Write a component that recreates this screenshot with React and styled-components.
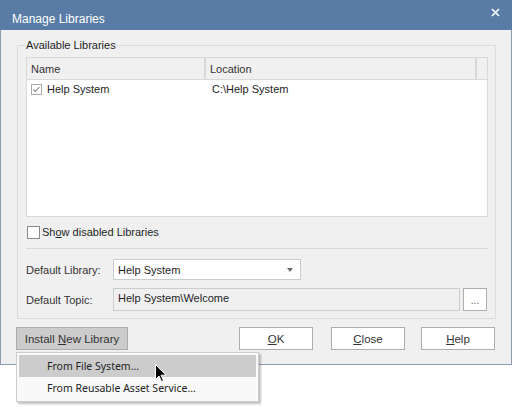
import React from 'react'
import styled, { createGlobalStyle } from 'styled-components'

const Global = createGlobalStyle`
  body {
    margin: 0;
    background: #ffffff;
    font-family: "Liberation Sans", Arial, sans-serif;
    font-size: 11px;
    color: #1e1e1e;
  }
`

const Page = styled.div`
  position: relative;
  width: 513px;
  height: 407px;
  overflow: hidden;
`

const Window = styled.div`
  width: 512px;
  box-sizing: border-box;
  background: #f0f0f0;
  border: 1px solid #8b9cb2;
  border-top: none;
`

const TitleBar = styled.div`
  height: 30px;
  margin: 0 -1px;
  background: #587ca5;
  color: #ffffff;
  display: flex;
  align-items: flex-start;
  justify-content: space-between;
  padding: 0 12px 0 12px;
  box-sizing: border-box;
  font-family: "Liberation Sans", sans-serif;
  font-size: 12px;
`

const Title = styled.span`
  margin-top: 12px;
`

const Close = styled.svg`
  margin-top: 8px;
`

const Body = styled.div`
  padding: 8px 15px 14px 16px;
`

const Group = styled.fieldset`
  margin: 0;
  min-width: 0;
  border: 1px solid #dcdcdc;
  padding: 5px 7px 7px 8px;
`

const Legend = styled.legend`
  padding: 0 1px;
  margin-left: -1px;
  line-height: 14px;
`

const List = styled.div`
  height: 160px;
  box-sizing: border-box;
  border: 1px solid #d9d9d9;
  background: #ffffff;
`

const Header = styled.div`
  display: flex;
  height: 22px;
  background: #f0f0f0;
  border-bottom: 1px solid #d9d9d9;
  box-sizing: border-box;
`

const HeadCell = styled.div`
  width: ${p => p.w}px;
  flex: ${p => (p.w ? 'none' : '1')};
  display: flex;
  align-items: center;
  padding-left: 4px;
  box-sizing: border-box;
  border-right: ${p => (p.last ? 'none' : '2px solid #d9d9d9')};
  color: #333;
`

const Row = styled.div`
  display: flex;
  align-items: center;
  height: 18px;
`

const Cell = styled.div`
  width: ${p => p.w}px;
  display: flex;
  align-items: center;
  gap: 5px;
  padding-left: ${p => p.pl}px;
  box-sizing: border-box;
`

const Check = styled.span`
  width: ${p => p.size}px;
  height: ${p => p.size}px;
  box-sizing: border-box;
  border: 1px solid ${p => (p.checked ? '#a8a8a8' : '#8a8a8a')};
  background: #ffffff;
  display: inline-flex;
  align-items: center;
  justify-content: center;
`

const CheckRow = styled.label`
  display: flex;
  align-items: center;
  gap: 2px;
  margin: 8px 0 0 1px;
  height: 14px;
`

const Separator = styled.div`
  height: 1px;
  background: #d9d9d9;
  margin: 9px 0 10px;
`

const FieldRow = styled.div`
  display: flex;
  align-items: center;
  margin-bottom: ${p => p.mb || 0}px;
`

const Label = styled.div`
  width: 87px;
  color: #333;
`

const Combo = styled.div`
  width: 188px;
  height: 21px;
  box-sizing: border-box;
  border: 1px solid #cccccc;
  background: #ffffff;
  display: flex;
  align-items: center;
  justify-content: space-between;
  padding: 0 7px 0 4px;
`

const Arrow = styled.span`
  width: 0;
  height: 0;
  border-left: 3px solid transparent;
  border-right: 3px solid transparent;
  border-top: 4px solid #6e6e6e;
`

const TextBox = styled.div`
  width: 347px;
  height: 23px;
  box-sizing: border-box;
  border: 1px solid #cccccc;
  background: #f0f0f0;
  padding: 3px 4px;
`

const SmallButton = styled.div`
  width: 24px;
  height: 23px;
  margin-left: 3px;
  box-sizing: border-box;
  border: 1px solid #adadad;
  background: #ffffff;
  display: flex;
  align-items: flex-end;
  justify-content: center;
  padding-bottom: 4px;
  font-size: 10px;
  color: #555;
`

const Footer = styled.div`
  display: flex;
  margin: 8px 0 0 -1px;
`

const Button = styled.div`
  width: ${p => p.w}px;
  height: 23px;
  margin-left: ${p => p.ml || 0}px;
  box-sizing: border-box;
  border: 1px solid #adadad;
  background: ${p => (p.pressed ? '#cccccc' : '#ffffff')};
  display: flex;
  align-items: center;
  justify-content: center;
  color: #333;
  font-size: 11.5px;
  u { text-decoration: underline; }
`

const Menu = styled.div`
  position: absolute;
  left: 16px;
  top: 352px;
  width: 243px;
  box-sizing: border-box;
  border: 1px solid #cccccc;
  background: #f9f9f9;
  padding: 2px;
  box-shadow: 2px 2px 2px rgba(0, 0, 0, 0.25);
  font-family: "Noto Sans", sans-serif;
  font-size: 10.5px;
`

const MenuItem = styled.div`
  height: 22px;
  display: flex;
  align-items: center;
  padding-left: 28px;
  background: ${p => (p.active ? '#cccccc' : 'transparent')};
  color: #222;
`

const Cursor = styled.svg`
  position: absolute;
  left: 155px;
  top: 364px;
`

export default function App() {
  return (
    <Page>
      <Global />
      <Window>
        <TitleBar>
          <Title>Manage Libraries</Title>
          <Close width="9" height="9" viewBox="0 0 9 9">
            <path d="M1 1L8 8M8 1L1 8" stroke="#fff" strokeWidth="1.6" />
          </Close>
        </TitleBar>
        <Body>
          <Group>
            <Legend>Available Libraries</Legend>
            <List>
              <Header>
                <HeadCell w={179}>Name</HeadCell>
                <HeadCell w={271}>Location</HeadCell>
                <HeadCell last />
              </Header>
              <Row>
                <Cell w={180} pl={4}>
                  <Check size={11} checked>
                    <svg width="9" height="9" viewBox="0 0 9 9">
                      <path d="M1.5 4.5L3.5 6.5L7.5 2" fill="none" stroke="#888" strokeWidth="1.1" />
                    </svg>
                  </Check>
                  <span>Help System</span>
                </Cell>
                <Cell w={271} pl={5}>C:\Help System</Cell>
              </Row>
            </List>
            <CheckRow>
              <Check size={13} />
              <span>Sh<u>o</u>w disabled Libraries</span>
            </CheckRow>
            <Separator />
            <FieldRow mb={8}>
              <Label>Default Library:</Label>
              <Combo>
                <span>Help System</span>
                <Arrow />
              </Combo>
            </FieldRow>
            <FieldRow>
              <Label>Default Topic:</Label>
              <TextBox>Help System\Welcome</TextBox>
              <SmallButton>...</SmallButton>
            </FieldRow>
          </Group>
          <Footer>
            <Button w={112} pressed><span>Install <u>N</u>ew Library</span></Button>
            <Button w={74} ml={111}><span><u>O</u>K</span></Button>
            <Button w={74} ml={18}><span><u>C</u>lose</span></Button>
            <Button w={74} ml={16}><span><u>H</u>elp</span></Button>
          </Footer>
        </Body>
      </Window>
      <Menu>
        <MenuItem active>From File System...</MenuItem>
        <MenuItem>From Reusable Asset Service...</MenuItem>
      </Menu>
      <Cursor width="12" height="19" viewBox="0 0 12 19">
        <path d="M0.5 0.5V15.5L4 12L6.5 17.5L8.5 16.5L6 11.2H11Z" fill="#000" stroke="#fff" strokeWidth="1" />
      </Cursor>
    </Page>
  )
}
